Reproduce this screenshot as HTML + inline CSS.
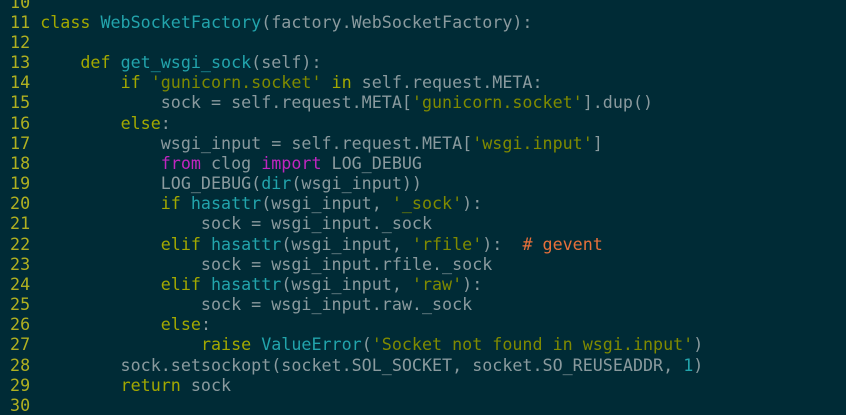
<!DOCTYPE html><html><head><meta charset="utf-8"><style>
body{margin:0;background:#002b36;width:846px;height:405px;overflow:hidden}
pre{position:absolute;top:-8.5px;left:0;margin:0;font-family:"DejaVu Sans Mono","Liberation Mono",monospace;font-size:16.7px;line-height:20.17px;color:#8a9a9e}
.n{color:#b0b020}.k{color:#a2a800}.s{color:#7f8a00}.c{color:#22a4ac}.m{color:#c026c0}.o{color:#e8703a}
</style></head><body><pre><span class="n"> 10</span>
<span class="n"> 11</span> <span class="k">class</span> <span class="c">WebSocketFactory</span>(factory.WebSocketFactory):
<span class="n"> 12</span>
<span class="n"> 13</span>     <span class="k">def</span> <span class="c">get_wsgi_sock</span>(self):
<span class="n"> 14</span>         <span class="k">if</span> <span class="s">'gunicorn.socket'</span> <span class="k">in</span> self.request.META:
<span class="n"> 15</span>             sock = self.request.META[<span class="s">'gunicorn.socket'</span>].dup()
<span class="n"> 16</span>         <span class="k">else</span>:
<span class="n"> 17</span>             wsgi_input = self.request.META[<span class="s">'wsgi.input'</span>]
<span class="n"> 18</span>             <span class="m">from</span> clog <span class="m">import</span> LOG_DEBUG
<span class="n"> 19</span>             LOG_DEBUG(<span class="c">dir</span>(wsgi_input))
<span class="n"> 20</span>             <span class="k">if</span> <span class="c">hasattr</span>(wsgi_input, <span class="s">'_sock'</span>):
<span class="n"> 21</span>                 sock = wsgi_input._sock
<span class="n"> 22</span>             <span class="k">elif</span> <span class="c">hasattr</span>(wsgi_input, <span class="s">'rfile'</span>):  <span class="o"># gevent</span>
<span class="n"> 23</span>                 sock = wsgi_input.rfile._sock
<span class="n"> 24</span>             <span class="k">elif</span> <span class="c">hasattr</span>(wsgi_input, <span class="s">'raw'</span>):
<span class="n"> 25</span>                 sock = wsgi_input.raw._sock
<span class="n"> 26</span>             <span class="k">else</span>:
<span class="n"> 27</span>                 <span class="k">raise</span> <span class="c">ValueError</span>(<span class="s">'Socket not found in wsgi.input'</span>)
<span class="n"> 28</span>         sock.setsockopt(socket.SOL_SOCKET, socket.SO_REUSEADDR, <span class="c">1</span>)
<span class="n"> 29</span>         <span class="k">return</span> sock
<span class="n"> 30</span>
</pre></body></html>
